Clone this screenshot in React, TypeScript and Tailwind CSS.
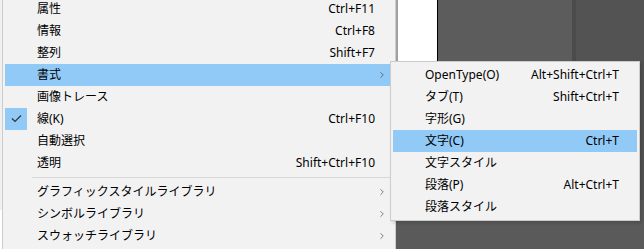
import { ChevronRight } from 'lucide-react';

type Item = {
  label?: string;
  shortcut?: string;
  sub?: boolean;
  active?: boolean;
  checked?: boolean;
  sep?: boolean;
};

const mainItems: Item[] = [
  { label: '属性', shortcut: 'Ctrl+F11' },
  { label: '情報', shortcut: 'Ctrl+F8' },
  { label: '整列', shortcut: 'Shift+F7' },
  { label: '書式', sub: true, active: true },
  { label: '画像トレース' },
  { label: '線(K)', shortcut: 'Ctrl+F10', checked: true },
  { label: '自動選択' },
  { label: '透明', shortcut: 'Shift+Ctrl+F10' },
  { sep: true },
  { label: 'グラフィックスタイルライブラリ', sub: true },
  { label: 'シンボルライブラリ', sub: true },
  { label: 'スウォッチライブラリ', sub: true },
];

const subItems: Item[] = [
  { label: 'OpenType(O)', shortcut: 'Alt+Shift+Ctrl+T' },
  { label: 'タブ(T)', shortcut: 'Shift+Ctrl+T' },
  { label: '字形(G)' },
  { label: '文字(C)', shortcut: 'Ctrl+T', active: true },
  { label: '文字スタイル' },
  { label: '段落(P)', shortcut: 'Alt+Ctrl+T' },
  { label: '段落スタイル' },
];

function CheckBox() {
  return (
    <div className="w-[22px] h-[22px] bg-[#91c9f7] shrink-0">
      <svg width="22" height="22" viewBox="0 0 22 22">
        <path d="M7 10.5 L10 13.5 L16 7.5" fill="none" stroke="#333" strokeWidth="1.2" />
      </svg>
    </div>
  );
}

function MainRow({ item }: { item: Item }) {
  if (item.sep) {
    return (
      <div className="h-[7px] flex items-center">
        <div className="ml-[27px] flex-1 h-px bg-[#d7d7d7]" />
      </div>
    );
  }
  return (
    <div className={`h-[22px] flex items-center ${item.active ? 'bg-[#91c9f7]' : ''}`}>
      {item.checked ? <CheckBox /> : <div className="w-[22px] shrink-0" />}
      <span className="ml-[10px] flex-1 whitespace-nowrap">{item.label}</span>
      {item.shortcut && <span className="whitespace-nowrap">{item.shortcut}</span>}
      <div className="w-[18px] flex items-center justify-end pr-[6px]">
        {item.sub && <ChevronRight className="w-[10px] h-[10px] text-[#444]" strokeWidth={1.6} />}
      </div>
    </div>
  );
}

function SubRow({ item }: { item: Item }) {
  return (
    <div className={`h-[22px] flex items-center pl-[32px] pr-[18px] ${item.active ? 'bg-[#91c9f7]' : ''}`}>
      <span className="flex-1 whitespace-nowrap">{item.label}</span>
      {item.shortcut && <span className="whitespace-nowrap">{item.shortcut}</span>}
    </div>
  );
}

export default function App() {
  return (
    <div className="relative w-[644px] h-[249px] overflow-hidden text-[12px] text-black font-['Noto_Sans','Noto_Sans_CJK_JP',sans-serif]">
      {/* 背景 */}
      <div className="flex flex-col w-full h-full">
        <div className="flex h-[200px]">
          <div className="w-[2px] bg-[#f0f0f0]" />
          <div className="w-[394px] bg-[#f2f2f2]" />
          <div className="w-[2px] bg-[#a0a0a0]" />
          <div className="w-[39px] bg-white" />
          <div className="w-px bg-black" />
          <div className="w-[134px] bg-[#5c5c5c]" />
          <div className="w-[4px] bg-[#4b4b4b]" />
          <div className="flex-1 bg-[#535353]" />
        </div>
        <div className="flex flex-1">
          <div className="w-[2px] h-[10px] bg-[#f0f0f0]" />
          <div className="flex-1 bg-[#5a5a5a]" />
        </div>
      </div>

      {/* メインメニュー */}
      <div className="absolute left-[2px] top-[-5px] w-[394px] border border-[#cccccc] bg-[#f2f2f2] p-[2px]">
        {mainItems.map((item, i) => (
          <MainRow key={i} item={item} />
        ))}
      </div>

      {/* サブメニュー */}
      <div className="absolute left-[390px] top-[61px] w-[250px] border border-[#cccccc] bg-[#f2f2f2] p-[2px] shadow-[2px_2px_3px_rgba(0,0,0,0.15)]">
        {subItems.map((item, i) => (
          <SubRow key={i} item={item} />
        ))}
      </div>
    </div>
  );
}
